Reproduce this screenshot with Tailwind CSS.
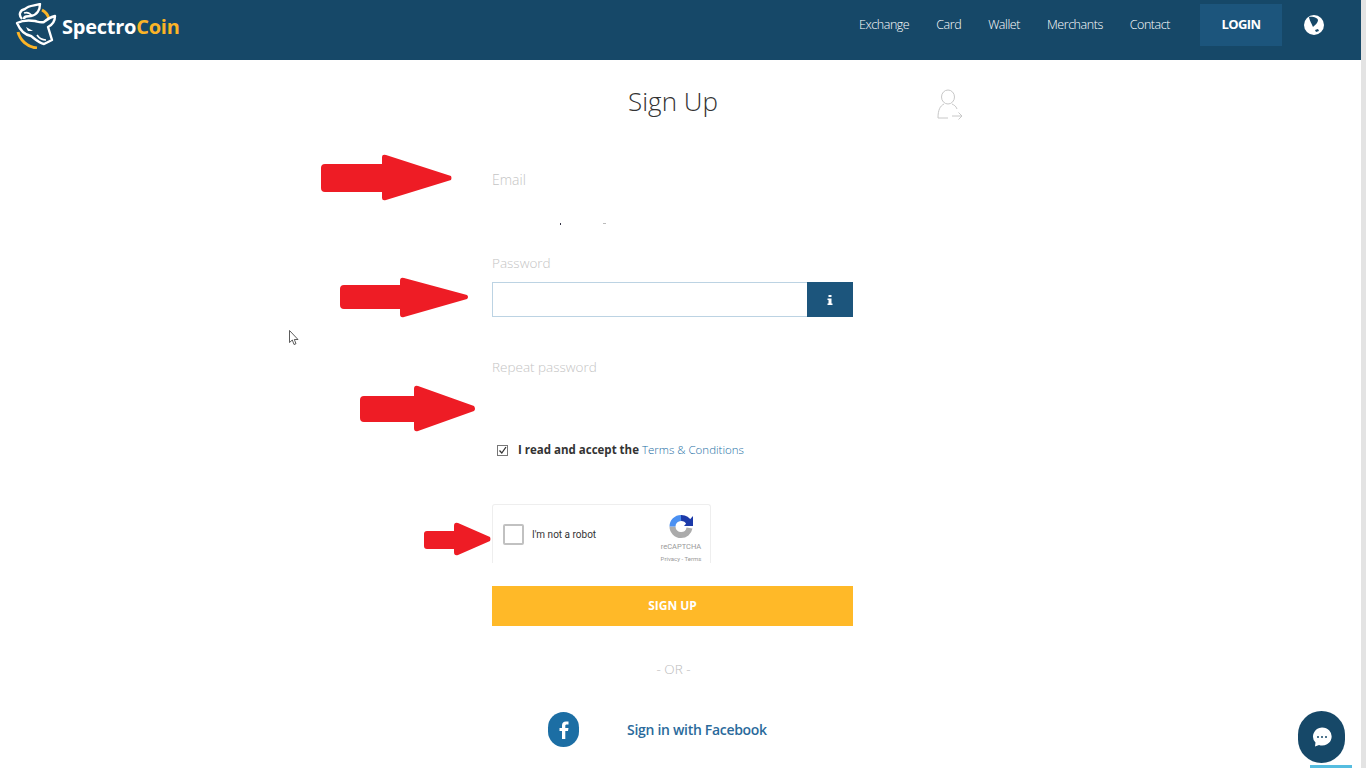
<!DOCTYPE html>
<html lang="en">

<head>
  <meta charset="UTF-8" />
  <meta name="viewport" content="width=device-width, initial-scale=1.0" />
  <title>SpectroCoin - Sign Up</title>
  <script src="https://cdn.jsdelivr.net/npm/@tailwindcss/browser@4"></script>
</head>

<body class="relative h-[768px] w-[1366px] overflow-hidden bg-white font-['Open_Sans',sans-serif]">
  <!-- scrollbar strip -->
  <div class="absolute right-0 top-0 h-full w-[5px] bg-[#e3e3e3]"></div>

  <!-- Nav -->
  <header class="flex h-[60px] w-[1361px] items-center bg-[#164868] pl-[15px]">
    <a href="#" class="flex items-center">
      <svg class="-mt-[9px] h-[46px] w-[42px]" viewBox="1 1 40 46" fill="none">
        <path d="M3 30 C5 38 12 45 22 46" stroke="#fbb427" stroke-width="3" />
        <path d="M27 8 C31 10 33 13 34 17" stroke="#fbb427" stroke-width="3" />
        <path d="M7 17 C3 13 5 8 10 7 C14 3 20 4 25 2 C25 8 22 13 16 14 C12 14 9 14 9 17" stroke="#fff" stroke-width="2.4" stroke-linejoin="round" />
        <path d="M9 11 C12 10 15 11 17 14" stroke="#fff" stroke-width="1.6" />
        <path d="M2 21 C8 18 14 18 20 19 C24 20 26 21 29 20 C32 17 36 15 40 14 C40 19 37 23 33 25 L37 38 L29 42 C24 41 20 37 16 34 C10 33 5 28 2 21 Z" fill="#164868" stroke="#fff" stroke-width="2.4" stroke-linejoin="round" />
        <path d="M11 25 L18 29 L13 29 Z" fill="#fff" />
        <path d="M22 33 C24 36 27 38 31 38" stroke="#fff" stroke-width="1.6" />
      </svg>
      <span class="-mt-[7px] ml-[5px] text-[20px] font-bold tracking-[-0.25px] text-white">Spectro<span class="text-[#fbb427]">Coin</span></span>
    </a>
    <nav class="ml-auto flex -translate-y-[5px] items-center text-[12.5px] tracking-[-0.45px] font-light text-white">
      <a href="#" class="mr-[27px]">Exchange</a>
      <a href="#" class="mr-[27px]">Card</a>
      <a href="#" class="mr-[27px]">Wallet</a>
      <a href="#" class="mr-[27px]">Merchants</a>
      <a href="#" class="mr-[30px]">Contact</a>
      <a href="#" class="flex h-[42px] w-[82px] items-center justify-center bg-[#1c557c] text-[13px] tracking-[-0.6px] font-bold">LOGIN</a>
    </nav>
    <svg class="ml-[22px] mr-[37px] h-[20px] w-[20px] -translate-y-[5px]" viewBox="0 0 20 20">
      <circle cx="10" cy="10" r="10" fill="#fff" />
      <path d="M5 2 C8 1 14 3 14 5 C14 8 11 10 9 12 C8 9 6 7 5 2 Z" fill="#164868" />
      <path d="M11 15 L14 14 L15 16 L12 17 Z" fill="#164868" />
    </svg>
  </header>

  <!-- Form -->
  <main class="relative ml-[492px] w-[361px]">
    <h1 class="pl-[1px] pt-[21px] text-center text-[26px] leading-[40px] font-light text-[#333]">Sign Up</h1>

    <label class="mt-[49px] block h-[20px] text-[14px] leading-[20px] font-light text-[#c4c4c4]">Email</label>
    <div class="relative h-[63px]">
      <span class="absolute left-[68px] top-[33px] h-[2px] w-[1px] bg-[#334]"></span>
      <span class="absolute left-[111px] top-[33px] h-[1px] w-[3px] bg-[#bbb]"></span>
    </div>

    <label class="mb-[9px] block h-[20px] text-[13.5px] leading-[20px] font-light text-[#c4c4c4]">Password</label>
    <div class="flex h-[35px] border border-[#bcd3e3]">
      <input type="password" class="min-w-0 flex-1 bg-white outline-none" />
      <button class="-my-px -mr-px flex w-[46px] items-center justify-center bg-[#1c557c]">
        <svg class="h-[10px] w-[6px]" viewBox="0 0 6 10" fill="#fff">
          <rect x="1.5" y="0" width="3" height="2" />
          <path d="M0.5 3.5 H4.5 V8.5 H5.5 V10 H0.5 V8.5 H1.5 V5 H0.5 Z" />
        </svg>
      </button>
    </div>

    <label class="mt-[40px] block h-[20px] text-[13.5px] leading-[20px] font-light text-[#c4c4c4]">Repeat password</label>

    <div class="mt-[63px] flex h-[20px] items-center">
      <span class="ml-[5px] flex h-[11px] w-[11px] items-center justify-center border border-[#777] bg-white">
        <svg class="h-[9px] w-[9px]" viewBox="0 0 9 9" fill="none"><path d="M1.5 4.5 L3.8 7 L8 1" stroke="#333" stroke-width="1.3" /></svg>
      </span>
      <span class="ml-[10px] text-[11.5px] font-bold text-[#333]">I read and accept the</span>
      <a href="#" class="ml-[3px] text-[11.5px] font-light text-[#1c6ea4]">Terms &amp; Conditions</a>
    </div>

    <!-- reCAPTCHA -->
    <div class="relative mt-[44px] flex h-[59px] w-[219px] items-center overflow-hidden rounded-t-[3px] border-x border-t border-[#eeeeee] bg-white pl-[10px] font-['Roboto',sans-serif]">
      <span class="h-[21px] w-[21px] rounded-[2px] border-2 border-[#c1c1c1] bg-white"></span>
      <span class="ml-[8px] text-[10px] text-[#333]">I'm not a robot</span>
      <div class="absolute right-[7px] top-[8px] flex w-[44px] flex-col items-center">
        <svg class="h-[27px] w-[24px]" viewBox="0 0 24 27" fill="none">
          <path d="M12 22 A8.5 8.5 0 0 1 3.5 13.5" stroke="#ababab" stroke-width="6" />
          <path d="M20.5 15 A8.5 8.5 0 0 1 12 22" stroke="#ababab" stroke-width="6" />
          <path d="M3.5 13.5 A8.5 8.5 0 0 1 12 5" stroke="#4a90f2" stroke-width="6" />
          <path d="M12 5 A8.5 8.5 0 0 1 20 10" stroke="#1c3aa9" stroke-width="6" />
          <path d="M15 13 H24 V3 Z" fill="#1c3aa9" />
        </svg>
        <span class="mt-[1px] text-[7.5px] leading-[11px] text-[#999]">reCAPTCHA</span>
        <span class="mt-[3px] whitespace-nowrap text-[6px] leading-[8px] text-[#999]">Privacy - Terms</span>
      </div>
    </div>

    <button class="mt-[23px] block h-[40px] w-full bg-[#ffb928] text-[12px] font-bold text-white">SIGN UP</button>

    <p class="mt-[33px] pl-[2px] text-center text-[13.5px] leading-[20px] font-light text-[#bbb]">- OR -</p>

    <a href="#" class="mt-[33px] flex items-center">
      <span class="ml-[56px] flex h-[35px] w-[31px] items-center justify-center rounded-full bg-[#1c6ea4]">
        <svg class="h-[18px] w-[10px]" viewBox="0 0 10 18" fill="#fff"><path d="M3 18 V10 H0.5 V7 H3 V4.5 C3 2 4.5 0.5 7 0.5 H9.5 V3.5 H7.8 C6.6 3.5 6.3 4 6.3 5 V7 H9.5 L9 10 H6.3 V18 Z" /></svg>
      </span>
      <span class="ml-[48px] text-[14px] tracking-[-0.3px] font-semibold text-[#2a6a9b]">Sign in with Facebook</span>
    </a>

    <!-- user icon beside the title -->
    <svg class="absolute left-[445px] top-[29px] h-[32px] w-[26px]" viewBox="0 0 26 32" fill="none" stroke="#c8c8c8" stroke-width="1">
      <ellipse cx="11" cy="8" rx="6.5" ry="7" />
      <path d="M7 15 C3 17 1 21 1 29 H11" />
      <path d="M15 15 C17 16 19 17 20 20" />
      <path d="M15 27 H25 M21.5 23.5 L25 27 L21.5 30.5" />
    </svg>
  </main>

  <!-- Red arrows laid over the page -->
  <svg class="pointer-events-none absolute left-0 top-0 h-[768px] w-[1366px]" viewBox="0 0 1366 768" fill="#ee1c25">
    <path d="M325 164 H382 V157 Q382 154 386 155 L451 176 Q452 178 451 180 L386 200 Q382 201 382 198 V192 H325 Q321 192 321 188 V168 Q321 164 325 164 Z" />
    <path d="M344 285 H400 V281 Q400 277 404 278 L467 295 Q469 297 467 299 L404 317 Q400 318 400 314 V309 H344 Q340 309 340 305 V289 Q340 285 344 285 Z" />
    <path d="M364 396 H414 V389 Q414 385 418 386 L474 406 Q476 409 474 411 L418 431 Q414 432 414 428 V422 H364 Q360 422 360 418 V400 Q360 396 364 396 Z" />
    <path d="M427 531 H454 V526 Q454 522 458 523 L490 537 Q491 539 490 541 L458 555 Q454 556 454 552 V549 H427 Q424 549 424 546 V534 Q424 531 427 531 Z" />
  </svg>

  <!-- Mouse cursor -->
  <svg class="absolute left-[289px] top-[330px] h-[16px] w-[10px]" viewBox="0 0 10 16" fill="#fff" stroke="#333" stroke-width="0.8">
    <path d="M0.5 0.5 V12.5 L3.3 10 L5 14.5 L7 13.7 L5.3 9.5 H9 Z" />
  </svg>

  <!-- Chat bubble -->
  <div class="absolute left-[1298px] top-[711px] flex h-[52px] w-[47px] items-center justify-center rounded-full bg-[#164868]">
    <svg class="h-[20px] w-[20px]" viewBox="0 0 20 20">
      <path d="M10 0.5 A9.5 9 0 1 1 7 18 L3 19.5 L3.5 15.5 A9.5 9 0 0 1 10 0.5 Z" fill="#fff" />
      <circle cx="6" cy="10" r="1" fill="#164868" />
      <circle cx="10" cy="10" r="1" fill="#164868" />
      <circle cx="14" cy="10" r="1" fill="#164868" />
    </svg>
  </div>
  <div class="absolute left-[1310px] top-[765px] h-[3px] w-[42px] bg-[#55bde0]"></div>
</body>

</html>
